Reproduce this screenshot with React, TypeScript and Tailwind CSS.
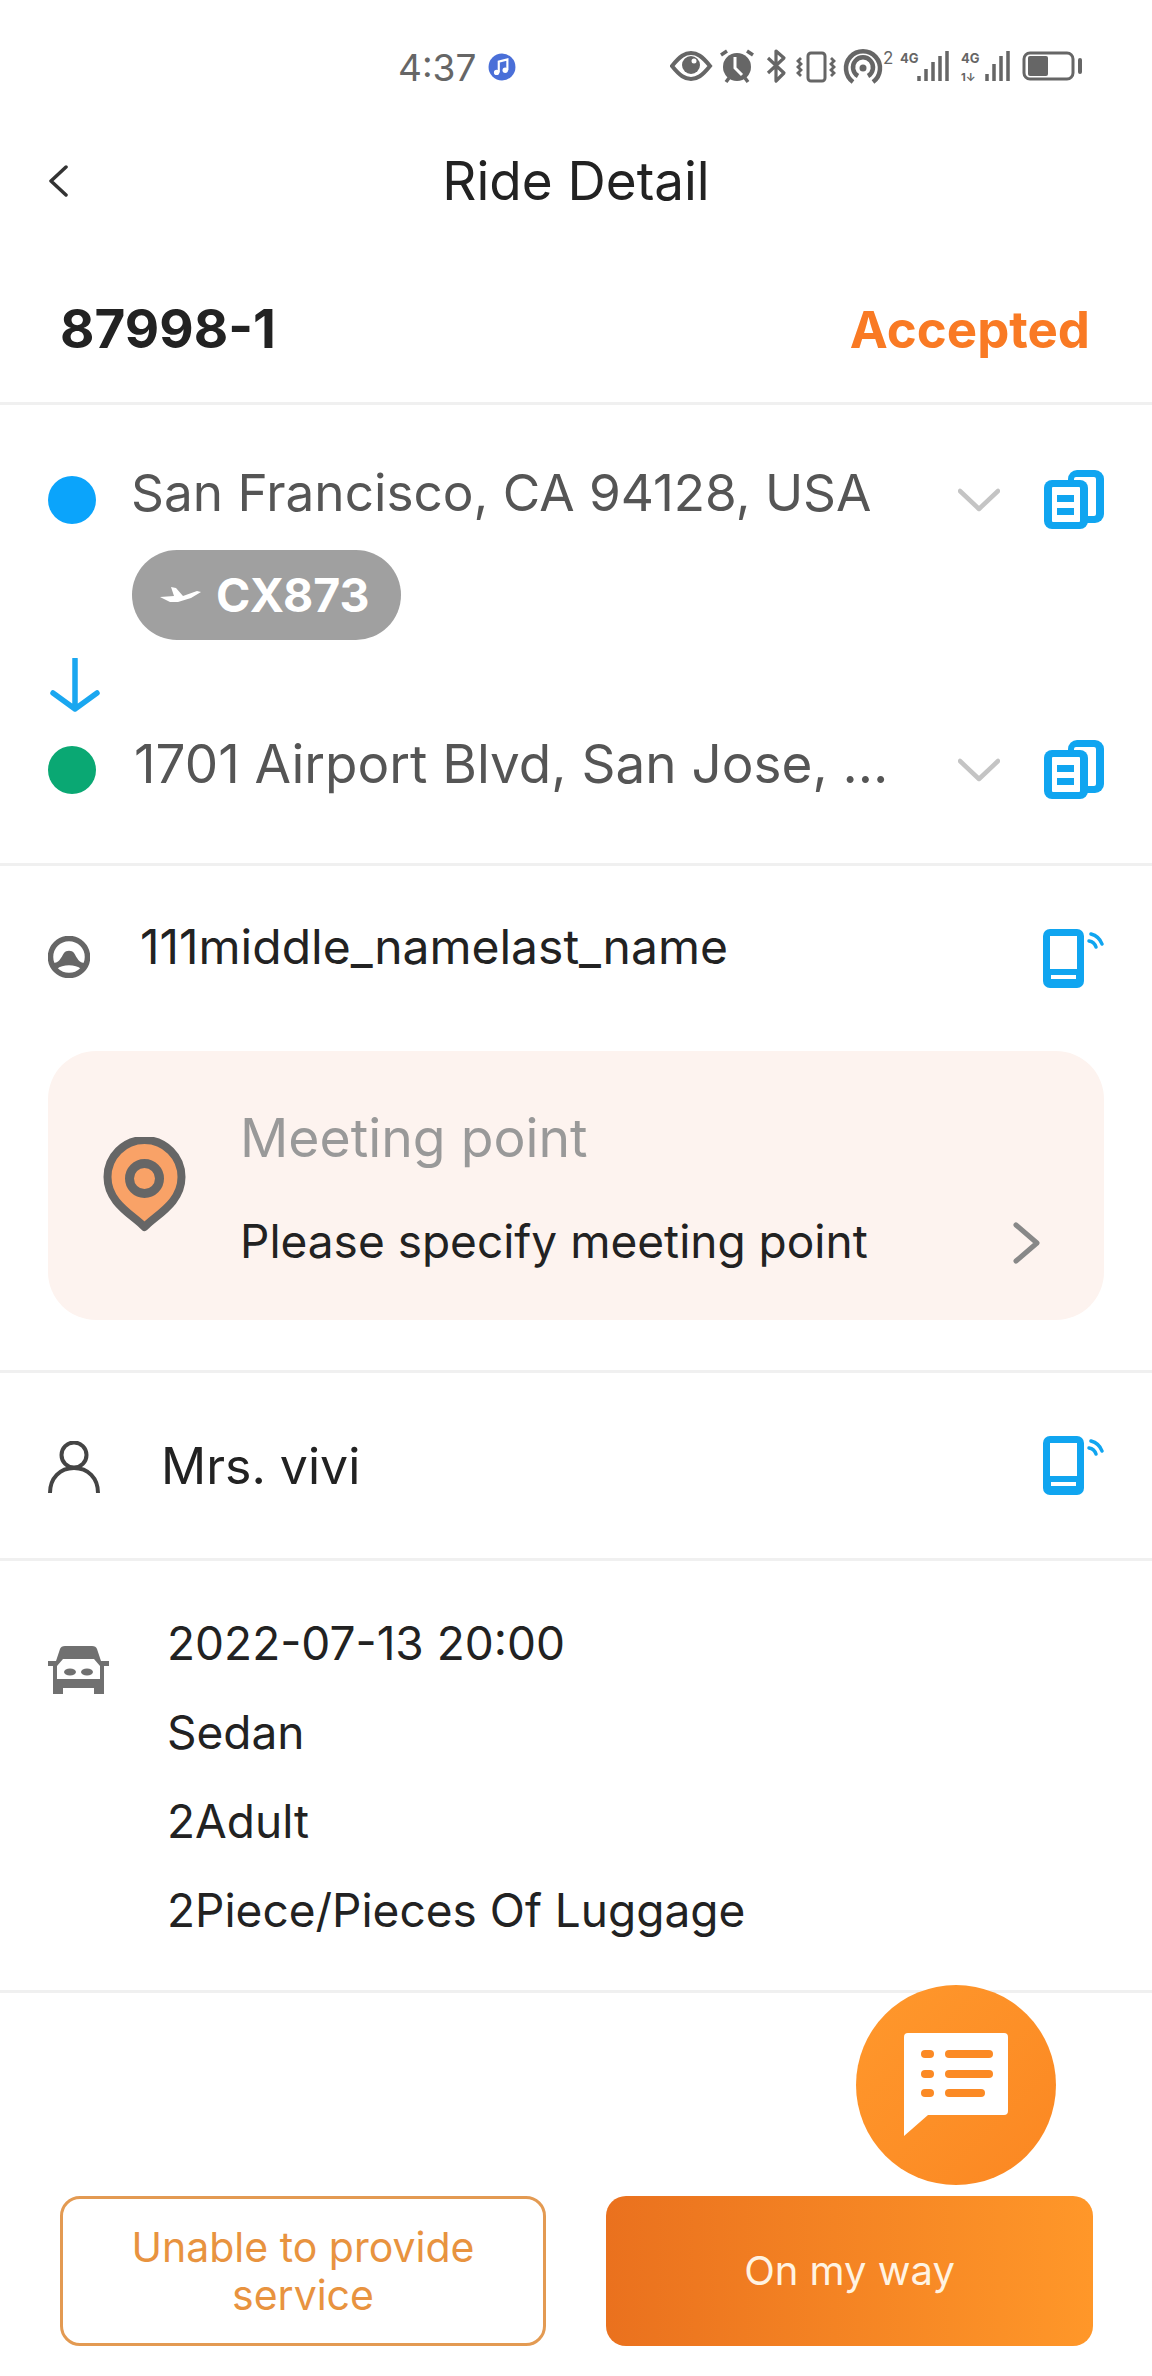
import React from "react";

const BLUE = "#10a5f0";

function CopyIcon() {
  return (
    <svg width="60" height="59" viewBox="0 0 60 59">
      <rect x="24" y="0" width="36" height="53" rx="9" fill={BLUE} />
      <rect x="30" y="7" width="22" height="39" rx="2" fill="#fff" />
      <rect x="0" y="10" width="44" height="49" rx="8" fill={BLUE} />
      <rect x="8" y="17" width="28" height="35" rx="1" fill="#fff" />
      <rect x="13" y="25" width="17" height="7" fill={BLUE} />
      <rect x="13" y="38" width="17" height="7" fill={BLUE} />
    </svg>
  );
}

function PhoneIcon() {
  return (
    <svg width="61" height="59" viewBox="0 0 61 59" fill="none">
      <rect x="0" y="0" width="41" height="59" rx="7" fill={BLUE} />
      <rect x="7" y="7" width="27" height="33" fill="#fff" />
      <rect x="8" y="46" width="25" height="4" fill="#fff" />
      <path d="M46 12a9 9 0 0 1 7 6" stroke={BLUE} strokeWidth="3.5" strokeLinecap="round" />
      <path d="M48 5a16 16 0 0 1 11 10" stroke={BLUE} strokeWidth="3.5" strokeLinecap="round" />
    </svg>
  );
}

function ChevronDown() {
  return (
    <svg width="42" height="24" viewBox="0 0 42 24" fill="none">
      <path d="M2 3l19 18L40 3" stroke="#c4c4c4" strokeWidth="4.5" strokeLinecap="round" strokeLinejoin="round" />
    </svg>
  );
}

function Row({ children }: { children: React.ReactNode }) {
  return <div className="flex h-[59px] items-center pl-12 pr-12">{children}</div>;
}

export default function App() {
  return (
    <div
      className="relative flex h-[2376px] w-[1152px] flex-col overflow-hidden bg-white text-[#222]"
      style={{ fontFamily: "Inter, 'Noto Sans', sans-serif" }}
    >
      <div className="flex h-[134px] items-center pl-[398px] pr-[68px] text-[#666]">
        <span className="w-[78px] text-[37px] leading-none">4:37</span>
        <svg className="ml-[12px]" width="28" height="28" viewBox="0 0 26 26">
          <circle cx="13" cy="13" r="12.5" fill="#4a6fd8" />
          <path d="M10 18V8l8-2v10" stroke="#fff" strokeWidth="2" fill="none" />
          <circle cx="8" cy="18" r="2.5" fill="#fff" />
          <circle cx="16" cy="16" r="2.5" fill="#fff" />
        </svg>
        <svg className="ml-auto" width="414" height="36" viewBox="0 0 414 36" fill="none">
          <path d="M2 17C10 7 15 4 21 4s11 3 19 13c-8 10-13 13-19 13S10 27 2 17z" stroke="#666" strokeWidth="4" />
          <circle cx="21" cy="16" r="9" fill="#666" />
          <circle cx="24" cy="12" r="2.5" fill="#fff" />
          <path d="M51 6l6-4M83 6l-6-4M56 33l3-4M78 33l-3-4" stroke="#666" strokeWidth="3.5" />
          <circle cx="67" cy="18" r="14" fill="#666" />
          <path d="M65 8v11l7 7" stroke="#fff" strokeWidth="3" />
          <path d="M98 9l16 15-8 8V2l8 7-16 15" stroke="#666" strokeWidth="3.2" strokeLinejoin="round" />
          <rect x="138" y="4" width="17" height="28" rx="3" stroke="#666" strokeWidth="3" />
          <path d="M131 9l-3 3 3 3-3 3 3 3-3 3 3 3M161 9l3 3-3 3 3 3-3 3 3 3-3 3" stroke="#666" strokeWidth="2.8" />
          <path d="M183 33a17 17 0 1 1 20 0M188 27a10 10 0 1 1 10 0" stroke="#666" strokeWidth="4.5" />
          <circle cx="193" cy="19" r="3.5" fill="#666" />
          <text x="213" y="15" fontSize="17" fill="#666">2</text>
          <text x="230" y="14" fontSize="13" fontWeight="700" fill="#666">4G</text>
          <path d="M249 27v5M256 20v12M263 13v19M270 7v25M277 2v30" stroke="#666" strokeWidth="3.5" />
          <text x="291" y="14" fontSize="13" fontWeight="700" fill="#666">4G</text>
          <text x="291" y="32" fontSize="11" fontWeight="700" fill="#666">1↓</text>
          <path d="M317 25v7M324 15v17M331 7v25M338 2v30" stroke="#666" strokeWidth="3.5" />
          <rect x="354" y="4" width="49" height="26" rx="6" stroke="#666" strokeWidth="3" />
          <rect x="358" y="7" width="20" height="20" rx="2" fill="#666" />
          <rect x="408" y="9" width="4" height="16" rx="2" fill="#666" />
        </svg>
      </div>

      <div className="relative flex h-[96px] items-center justify-center">
        <svg className="absolute left-12 top-[31px]" width="21" height="32" viewBox="0 0 21 32" fill="none">
          <path d="M18 2L3 16l15 14" stroke="#333" strokeWidth="3.5" strokeLinecap="round" strokeLinejoin="round" />
        </svg>
        <h1 className="mb-[2px] text-[53px] font-normal leading-none">Ride Detail</h1>
      </div>

      <div className="flex h-[175px] items-center justify-between border-b-[3px] border-[#f0f0f0] pl-[60px] pr-[62px] pt-[26px]">
        <span className="text-[53px] font-bold leading-none">87998-1</span>
        <span className="text-[51px] font-bold leading-none text-[#f97a24]">Accepted</span>
      </div>

      <section className="h-[461px] border-b-[3px] border-[#f0f0f0] pt-[65px]">
        <Row>
          <span className="h-12 w-12 shrink-0 rounded-full bg-[#0ba4fb]" />
          <span className="mb-[13px] ml-[35px] flex-1 text-[51.3px] leading-none text-[#555]">San Francisco, CA 94128, USA</span>
          <ChevronDown />
          <span className="ml-[44px]"><CopyIcon /></span>
        </Row>
        <div className="ml-[132px] mt-[21px] flex h-[90px] w-[269px] items-center gap-[12px] rounded-full bg-[#a0a0a0] pl-[28px]">
          <svg width="44" height="22" viewBox="0 0 44 22" fill="#fff">
            <path d="M0 13l14-1-3-9 5 1 7 8 14-5 4 1-10 6-13 4H10z" />
          </svg>
          <span className="text-[46.5px] font-bold leading-none text-white">CX873</span>
        </div>
        <svg className="ml-[50px] mt-[18px]" width="50" height="54" viewBox="0 0 50 54" fill="none">
          <path d="M25 1v50M3 35l22 16 22-16" stroke="#1aa7f0" strokeWidth="5.5" strokeLinecap="round" strokeLinejoin="round" />
        </svg>
        <div className="mt-[28px]">
          <Row>
            <span className="h-12 w-12 shrink-0 rounded-full bg-[#0aa873]" />
            <span className="mb-[11px] ml-[38px] flex-1 whitespace-nowrap text-[53px] leading-none text-[#555]">1701 Airport Blvd, San Jose, …</span>
            <ChevronDown />
            <span className="ml-[44px]"><CopyIcon /></span>
          </Row>
        </div>
      </section>

      <section className="h-[507px] border-b-[3px] border-[#f0f0f0] px-12">
        <div className="mt-[63px] flex h-[59px] items-center">
          <svg className="mt-[-3px]" width="42" height="42" viewBox="0 0 42 42" fill="none">
            <circle cx="21" cy="21" r="18.5" stroke="#666" strokeWidth="5.5" />
            <path d="M5 27C11 27 13 22 16 17C18 14 24 14 26 17C29 22 31 27 37 27L33 33C28 28 14 28 9 33Z" fill="#666" />
          </svg>
          <span className="mb-[23px] ml-[50px] flex-1 text-[48px] leading-none">111middle_namelast_name</span>
          <PhoneIcon />
        </div>
        <div className="mt-[63px] flex h-[269px] items-center rounded-[48px] bg-[#fdf3ef] pl-[55px] pr-[64px]">
          <svg className="mt-[-1px]" width="83" height="96" viewBox="0 0 83 96" fill="none">
            <path d="M41.500 90C30 78 4.500 66 4.500 40A37 37 0 0 1 78.500 40C78.500 66 53 78 41.500 90Z" fill="#f9a267" stroke="#666" strokeWidth="8" strokeLinejoin="round" />
            <circle cx="41.500" cy="41.500" r="15" stroke="#666" strokeWidth="9" />
          </svg>
          <div className="ml-[54px] flex-1 pt-[4px]">
            <div className="text-[53.5px] leading-none text-[#999]">Meeting point</div>
            <div className="mt-[53px] text-[46px] leading-none">Please specify meeting point</div>
          </div>
          <svg className="mt-[114px]" width="27" height="42" viewBox="0 0 27 42" fill="none">
            <path d="M3 3l21 18L3 39" stroke="#888" strokeWidth="5" strokeLinecap="round" strokeLinejoin="round" />
          </svg>
        </div>
      </section>

      <section className="flex h-[188px] items-center border-b-[3px] border-[#f0f0f0] pl-12 pr-12">
        <svg className="mt-[2px]" width="52" height="52" viewBox="0 0 52 52" fill="none">
          <circle cx="26" cy="14" r="12.500" stroke="#444" strokeWidth="4" />
          <path d="M2 52c0-15 10-25 24-25s24 10 24 25" stroke="#444" strokeWidth="4" />
        </svg>
        <span className="ml-[61px] flex-1 text-[50px] leading-none">Mrs. vivi</span>
        <PhoneIcon />
      </section>

      <section className="flex h-[432px] border-b-[3px] border-[#f0f0f0] pl-12 pt-[38px]">
        <svg className="mt-[47px]" width="61" height="48" viewBox="0 0 61 48" fill="#707070">
          <path fillRule="evenodd" d="M12 3q1-3 5-3h27q4 0 5 3l4 12h8v5h-5v28H46v-6H15v6H5V20H0v-5h8zM15 13L9 20v13h43V20l-6-7z" />
          <ellipse cx="22" cy="26" rx="6" ry="3.500" />
          <ellipse cx="39" cy="26" rx="6" ry="3.500" />
        </svg>
        <div className="ml-[58px] text-[46px] leading-[89px]">
          <div>2022-07-13 20:00</div>
          <div>Sedan</div>
          <div>2Adult</div>
          <div>2Piece/Pieces Of Luggage</div>
        </div>
      </section>

      <button className="absolute left-[856px] top-[1985px] flex h-[200px] w-[200px] items-center justify-center rounded-full bg-gradient-to-br from-[#ff982c] to-[#fb8722]">
        <svg width="104" height="103" viewBox="0 0 104 103" fill="#fff" className="mt-[-2px]">
          <path d="M4 0h96q4 0 4 4v74q0 4-4 4H24L0 103V4q0-4 4-4z" />
          <g fill="#fb8a25">
            <rect x="17" y="17" width="13" height="8" rx="4" />
            <rect x="41" y="17" width="48" height="8" rx="4" />
            <rect x="17" y="37" width="13" height="8" rx="4" />
            <rect x="41" y="37" width="48" height="8" rx="4" />
            <rect x="17" y="56" width="13" height="8" rx="4" />
            <rect x="41" y="56" width="40" height="8" rx="4" />
          </g>
        </svg>
      </button>

      <div className="mt-[203px] flex gap-[60px] pl-[60px]">
        <button className="flex h-[150px] w-[486px] items-center justify-center rounded-[20px] border-[3px] border-[#e39a52] bg-white px-[60px] text-center text-[41px] leading-[48px] text-[#e8933f]">
          Unable to provide service
        </button>
        <button className="flex h-[150px] w-[487px] items-center justify-center rounded-[20px] bg-gradient-to-r from-[#ea711e] to-[#ff9729] text-[40px] leading-none text-[#fff3e2]">
          On my way
        </button>
      </div>
    </div>
  );
}
